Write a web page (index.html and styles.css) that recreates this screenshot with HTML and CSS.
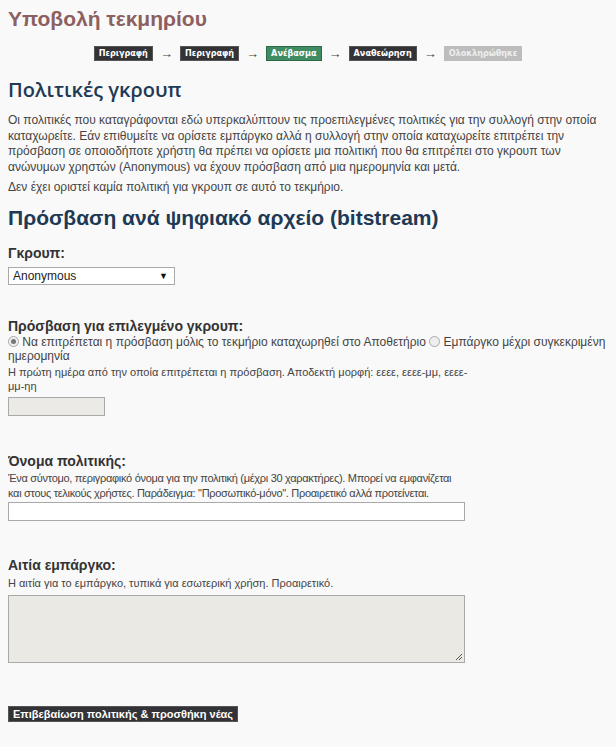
FILE: index.html
```html
<!DOCTYPE html>
<html lang="el">
<head>
<meta charset="utf-8">
<title>Υποβολή τεκμηρίου</title>
<link rel="stylesheet" href="styles.css">
</head>
<body>
<h1 class="page-title">Υποβολή τεκμηρίου</h1>
<div class="progress">
  <span class="step">Περιγραφή</span><span class="arrow">→</span>
  <span class="step">Περιγραφή</span><span class="arrow">→</span>
  <span class="step current">Ανέβασμα</span><span class="arrow">→</span>
  <span class="step">Αναθεώρηση</span><span class="arrow">→</span>
  <span class="step disabled">Ολοκληρώθηκε</span>
</div>
<h2 class="section-title">Πολιτικές γκρουπ</h2>
<p class="text">Οι πολιτικές που καταγράφονται εδώ υπερκαλύπτουν τις προεπιλεγμένες πολιτικές για την συλλογή στην οποία καταχωρείτε. Εάν επιθυμείτε να ορίσετε εμπάργκο αλλά η συλλογή στην οποία καταχωρείτε επιτρέπει την πρόσβαση σε οποιοδήποτε χρήστη θα πρέπει να ορίσετε μια πολιτική που θα επιτρέπει στο γκρουπ των ανώνυμων χρηστών (Anonymous) να έχουν πρόσβαση από μια ημερομηνία και μετά.</p>
<p class="text">Δεν έχει οριστεί καμία πολιτική για γκρουπ σε αυτό το τεκμήριο.</p>
<h2 class="section-title bold">Πρόσβαση ανά ψηφιακό αρχείο (bitstream)</h2>

<div class="field group-field">
  <label class="label">Γκρουπ:</label>
  <div class="select"><span>Anonymous</span><span class="caret">▼</span></div>
</div>

<div class="field access-field">
  <label class="label">Πρόσβαση για επιλεγμένο γκρουπ:</label>
  <div class="radios"><span class="radio checked"></span> Να επιτρέπεται η πρόσβαση μόλις το τεκμήριο καταχωρηθεί στο Αποθετήριο <span class="radio"></span> Εμπάργκο μέχρι συγκεκριμένη ημερομηνία</div>
  <div class="help">Η πρώτη ημέρα από την οποία επιτρέπεται η πρόσβαση. Αποδεκτή μορφή: εεεε, εεεε-μμ, εεεε-μμ-ηη</div>
  <div class="input small"></div>
</div>

<div class="field name-field">
  <label class="label">Όνομα πολιτικής:</label>
  <div class="help tight">Ένα σύντομο, περιγραφικό όνομα για την πολιτική (μέχρι 30 χαρακτήρες). Μπορεί να εμφανίζεται και στους τελικούς χρήστες. Παράδειγμα: "Προσωπικό-μόνο". Προαιρετικό αλλά προτείνεται.</div>
  <div class="input wide"></div>
</div>

<div class="field reason-field">
  <label class="label">Αιτία εμπάργκο:</label>
  <div class="help">Η αιτία για το εμπάργκο, τυπικά για εσωτερική χρήση. Προαιρετικό.</div>
  <div class="textarea"><svg class="grip" width="8" height="8" viewBox="0 0 8 8"><path d="M7 1 L1 7 M7 4 L4 7" stroke="#555" stroke-width="1" fill="none"/></svg></div>
</div>

<div class="actions"><span class="button">Επιβεβαίωση πολιτικής &amp; προσθήκη νέας</span></div>
</body>
</html>
```
FILE: styles.css
```css
html { background: #f9f9f9; }
body {
  margin: 8px;
  font-family: "Liberation Sans", Arial, sans-serif;
  color: #444;
  font-size: 12px;
}
.page-title {
  margin: 0;
  font-size: 21px;
  line-height: 20px;
  padding-top: 1px;
  font-weight: bold;
  color: #8c6060;
}
.progress {
  display: flex;
  justify-content: center;
  align-items: center;
  gap: 7px;
  margin-top: 17px;
  height: 15px;
}
.step {
  display: inline-block;
  background: #333236;
  color: #fff;
  font-family: "DejaVu Sans Condensed", "DejaVu Sans", sans-serif;
  font-size: 9px;
  font-weight: bold;
  line-height: 13px;
  padding: 0 4px;
  border: 1px solid #555;
}
.step.current { background: #3f8c62; border-color: #2a6a45; }
.step.disabled { background: #bdbdbd; border-color: #bdbdbd; color: #eee; }
.arrow { font-size: 13px; color: #444; }
.section-title {
  margin: 17px 0 0;
  font-family: "Open Sans", sans-serif;
  font-weight: 600;
  font-size: 20px;
  line-height: 24px;
  color: #1e3a55;
}
.section-title.bold {
  font-family: "Liberation Sans", Arial, sans-serif;
  font-weight: bold;
  font-size: 21px;
  margin-top: 10px;
}
.text {
  margin: 11px 0 0;
  line-height: 15.5px;
  color: #444;
}
.text + .text { margin-top: 5px; }
.group-field { margin-top: 15px; }
.access-field { margin-top: 33px; }
.name-field { margin-top: 37px; }
.reason-field { margin-top: 36px; }
.label {
  display: block;
  font-weight: bold;
  font-size: 14px;
  color: #333;
  line-height: 17px;
}
.select {
  margin-top: 5px;
  height: 16px;
  border: 1px solid #a9a9a9;
  background: #fff;
  display: flex;
  justify-content: space-between;
  align-items: center;
  padding: 0 6px 0 4px;
  width: 155px;
  color: #222;
}
.caret { font-size: 9px; color: #111; }
.radios {
  line-height: 14px;
  color: #444;
  width: 616px;
}
.radio {
  display: inline-block;
  width: 9px;
  height: 9px;
  border-radius: 50%;
  border: 1px solid #aaa;
  background: #eee;
  vertical-align: -1px;
  position: relative;
}
.radio.checked::after {
  content: "";
  position: absolute;
  left: 2px;
  top: 2px;
  width: 5px;
  height: 5px;
  border-radius: 50%;
  background: #777;
}
.help {
  font-size: 11px;
  line-height: 14px;
  width: 460px;
  margin-top: 2px;
  color: #444;
}
.help.tight {
  letter-spacing: -0.3px;
  line-height: 15px;
  width: 456px;
  margin-top: 1px;
}
.input {
  margin-top: 4px;
  height: 17px;
  border: 1px solid #a9a9a9;
  background: #fff;
}
.input.small { width: 95px; background: #ebeae6; }
.input.wide { width: 455px; margin-top: 1px; }
.textarea {
  margin-top: 5px;
  width: 455px;
  height: 66px;
  border: 1px solid #a9a9a9;
  background: #ebe9e4;
  position: relative;
}
.grip { position: absolute; right: 1px; bottom: 1px; }
.actions { margin-top: 43px; }
.button {
  display: inline-block;
  background: #333236;
  color: #fff;
  border: 1px solid #555;
  font-weight: bold;
  font-size: 11px;
  line-height: 14px;
  padding: 0 4px;
}
```
